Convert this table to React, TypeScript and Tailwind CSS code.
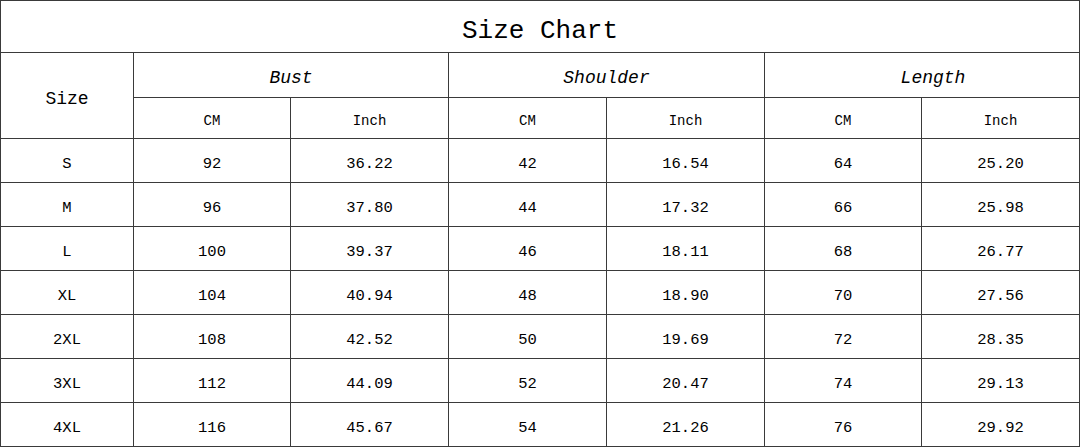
import React from "react";

const rows = [
  ["S", "92", "36.22", "42", "16.54", "64", "25.20"],
  ["M", "96", "37.80", "44", "17.32", "66", "25.98"],
  ["L", "100", "39.37", "46", "18.11", "68", "26.77"],
  ["XL", "104", "40.94", "48", "18.90", "70", "27.56"],
  ["2XL", "108", "42.52", "50", "19.69", "72", "28.35"],
  ["3XL", "112", "44.09", "52", "20.47", "74", "29.13"],
  ["4XL", "116", "45.67", "54", "21.26", "76", "29.92"],
];

const font = { fontFamily: '"Liberation Mono", "DejaVu Sans Mono", monospace' };

export default function App() {
  return (
    <div className="w-[1080px] h-[447px] bg-white" style={font}>
      <div className="grid grid-cols-[132px_156px_157px_157px_157px_156px_157px] grid-rows-[51px_44px_40px_repeat(7,43px)] gap-px bg-[#3a3a3a] p-px text-black">
        <div className="col-span-7 bg-white flex items-center justify-center pt-[10px] text-[26px]">
          Size Chart
        </div>
        <div className="row-span-2 bg-white flex items-center justify-center pt-[7px] text-[18px]">
          Size
        </div>
        <div className="col-span-2 bg-white flex items-center justify-center pt-[7px] text-[18px] italic">
          Bust
        </div>
        <div className="col-span-2 bg-white flex items-center justify-center pt-[7px] text-[18px] italic">
          Shoulder
        </div>
        <div className="col-span-2 bg-white flex items-center justify-center pt-[7px] pl-[22px] text-[18px] italic">
          Length
        </div>
        {["CM", "Inch", "CM", "Inch", "CM", "Inch"].map((t, i) => (
          <div key={i} className="bg-white flex items-center justify-center pt-[7px] text-[14px]">
            {t}
          </div>
        ))}
        {rows.map((r, ri) =>
          r.map((c, ci) => (
            <div key={ri + "-" + ci} className="bg-white flex items-center justify-center pt-[9px] text-[15.5px]">
              {c}
            </div>
          ))
        )}
      </div>
    </div>
  );
}
